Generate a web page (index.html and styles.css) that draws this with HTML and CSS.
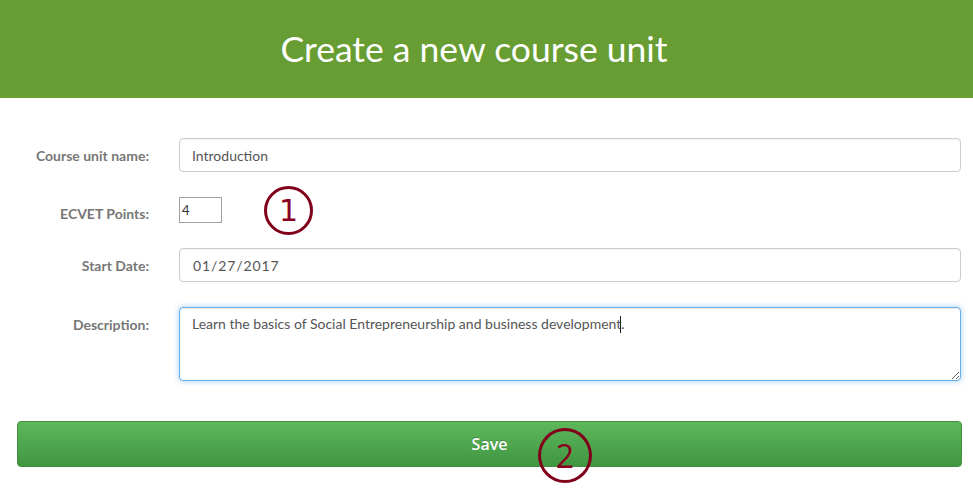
FILE: index.html
```html
<!DOCTYPE html>
<html>
<head>
<meta charset="utf-8">
<link rel="stylesheet" href="styles.css">
</head>
<body>
<header class="hero">
  <h1 class="hero-title">Create a new course unit</h1>
</header>
<form class="form">
  <div class="row">
    <label class="label">Course unit name:</label>
    <input class="field" type="text" value="Introduction">
  </div>
  <div class="row row-small">
    <label class="label">ECVET Points:</label>
    <input class="small-field" type="text" value="4">
    <span class="mark mark-1">1</span>
  </div>
  <div class="row">
    <label class="label">Start Date:</label>
    <input class="field date" type="text" value="01/27/2017">
  </div>
  <div class="row row-top">
    <label class="label label-top">Description:</label>
    <div class="area-wrap">
      <textarea class="area">Learn the basics of Social Entrepreneurship and business development.</textarea>
      <span class="caret"></span>
    </div>
  </div>
  <div class="actions">
    <button class="save" type="button">Save</button>
    <span class="mark mark-2">2</span>
  </div>
</form>
</body>
</html>
```
FILE: styles.css
```css
* { box-sizing: border-box; }
html, body { height: 100%; }
body {
  margin: 0;
  font-family: Lato, "Open Sans", sans-serif;
  background: #fff;
}
.hero {
  background: #679d32;
  height: 98px;
  display: flex;
  align-items: center;
  justify-content: center;
}
.hero-title {
  margin: 0 0 2px -25px;
  color: #fff;
  font-weight: 400;
  font-size: 35.5px;
}
.form {
  padding: 40px 12px 0 0;
}
.row {
  display: flex;
  align-items: center;
  margin-bottom: 25px;
  position: relative;
}
.row-top { align-items: flex-start; margin-bottom: 40px; }
.label {
  width: 149px;
  flex: none;
  text-align: right;
  font-size: 14px;
  font-weight: 700;
  color: #777;
  margin-right: 30px;
}
.row-small .label { padding-top: 6px; }
.label-top { padding-top: 9px; }
.field {
  flex: 1;
  height: 34px;
  border: 1px solid #ccc;
  border-radius: 4px;
  padding: 0 12px;
  font-family: Lato, sans-serif;
  font-size: 14px;
  color: #555;
  box-shadow: inset 0 1px 1px rgba(0,0,0,0.05);
  outline: none;
}
.date { letter-spacing: 0.9px; padding-left: 13px; }
.small-field {
  width: 43px;
  height: 26px;
  border: 1px solid #a0a0a0;
  padding: 0 2px;
  font-family: Lato, sans-serif;
  font-size: 13px;
  color: #333;
  outline: none;
}
.area-wrap {
  flex: 1;
  position: relative;
  display: flex;
}
.area {
  flex: 1;
  height: 74px;
  border: 1px solid #66afe9;
  border-radius: 4px;
  padding: 7px 12px;
  font-family: Lato, sans-serif;
  font-size: 14px;
  color: #555;
  line-height: 18px;
  resize: vertical;
  outline: none;
  box-shadow: inset 0 1px 1px rgba(0,0,0,0.075), 0 0 6px rgba(102,175,233,0.6);
}
.caret {
  position: absolute;
  left: 441px;
  top: 9px;
  width: 1px;
  height: 17px;
  background: #222;
}
.actions {
  position: relative;
  padding-left: 17px;
  margin-right: -1px;
  padding-bottom: 31px;
}
.save {
  display: block;
  width: 100%;
  height: 46px;
  border: 1px solid #43903f;
  border-radius: 4px;
  background: linear-gradient(#5cb85c, #419641);
  color: #fff;
  font-family: "Open Sans", sans-serif;
  font-size: 16px;
  font-weight: 600;
  text-shadow: 0 -1px 0 rgba(0,0,0,0.2);
}
.mark {
  position: absolute;
  border: 3px solid #80001c;
  border-radius: 50%;
  color: #8a0020;
  font-family: "DejaVu Sans", sans-serif;
  font-size: 30px;
  display: flex;
  align-items: center;
  justify-content: center;
  line-height: 1;
}
.mark-1 {
  left: 264px;
  top: -11px;
  width: 49px;
  height: 49px;
}
.mark-2 {
  left: 538px;
  top: 7px;
  width: 54px;
  height: 55px;
  font-family: "Open Sans", sans-serif;
  font-size: 32px;
}
```
